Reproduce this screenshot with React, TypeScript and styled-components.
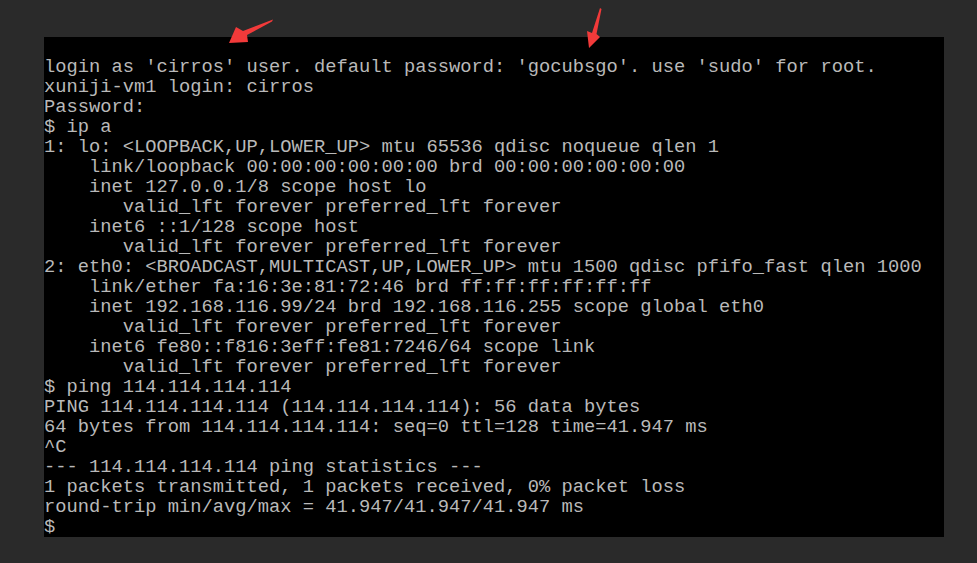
import React from "react";
import styled, { createGlobalStyle } from "styled-components";

const Global = createGlobalStyle`
  html, body { margin: 0; padding: 0; background: #2a2a2a; }
  #root { width: 977px; height: 563px; }
`;

const Page = styled.div`
  position: relative;
  width: 977px;
  height: 563px;
  background: #2a2a2a;
  padding: 37px 0 0 44px;
  box-sizing: border-box;
`;

const Screen = styled.div`
  width: 900px;
  height: 500px;
  background: #000;
  padding-top: 20px;
  box-sizing: border-box;
  overflow: hidden;
`;

const Line = styled.div`
  font-family: "Liberation Mono", "DejaVu Sans Mono", monospace;
  font-size: 18.75px;
  line-height: 20px;
  height: 20px;
  color: #b9b9b9;
  white-space: pre;
`;

const Arrows = styled.svg`
  position: absolute;
  left: 0;
  top: 0;
  pointer-events: none;
`;

const lines = [
  "login as 'cirros' user. default password: 'gocubsgo'. use 'sudo' for root.",
  "xuniji-vm1 login: cirros",
  "Password:",
  "$ ip a",
  "1: lo: <LOOPBACK,UP,LOWER_UP> mtu 65536 qdisc noqueue qlen 1",
  "    link/loopback 00:00:00:00:00:00 brd 00:00:00:00:00:00",
  "    inet 127.0.0.1/8 scope host lo",
  "       valid_lft forever preferred_lft forever",
  "    inet6 ::1/128 scope host",
  "       valid_lft forever preferred_lft forever",
  "2: eth0: <BROADCAST,MULTICAST,UP,LOWER_UP> mtu 1500 qdisc pfifo_fast qlen 1000",
  "    link/ether fa:16:3e:81:72:46 brd ff:ff:ff:ff:ff:ff",
  "    inet 192.168.116.99/24 brd 192.168.116.255 scope global eth0",
  "       valid_lft forever preferred_lft forever",
  "    inet6 fe80::f816:3eff:fe81:7246/64 scope link",
  "       valid_lft forever preferred_lft forever",
  "$ ping 114.114.114.114",
  "PING 114.114.114.114 (114.114.114.114): 56 data bytes",
  "64 bytes from 114.114.114.114: seq=0 ttl=128 time=41.947 ms",
  "^C",
  "--- 114.114.114.114 ping statistics ---",
  "1 packets transmitted, 1 packets received, 0% packet loss",
  "round-trip min/avg/max = 41.947/41.947/41.947 ms",
  "$",
];

export default function App() {
  return (
    <>
      <Global />
      <Page>
        <Screen>
          {lines.map((l, i) => (
            <Line key={i}>{l}</Line>
          ))}
        </Screen>
        <Arrows width="977" height="563" viewBox="0 0 977 563">
          <polygon
            points="273,19.5 272,21.5 247,35 248,42 229,43 236,27 243,31"
            fill="#f23a3a"
          />
          <polygon
            points="600,8 601.5,9 596.5,34 600,37 589,48 587,31 592,33"
            fill="#f23a3a"
          />
        </Arrows>
      </Page>
    </>
  );
}
